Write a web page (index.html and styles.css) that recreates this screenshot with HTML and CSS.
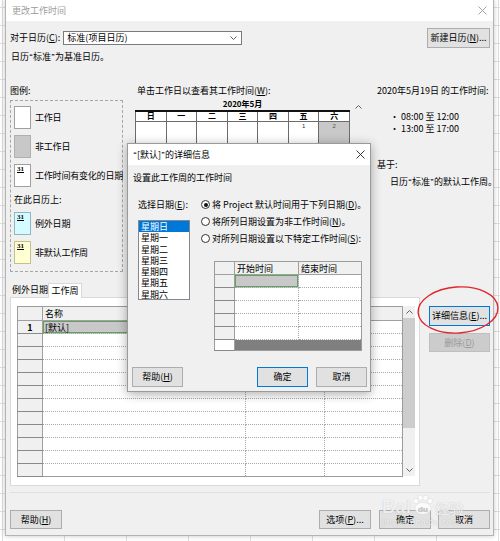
FILE: index.html
```html
<!DOCTYPE html>
<html lang="zh-CN">
<head>
<meta charset="utf-8">
<title>更改工作时间</title>
<link rel="stylesheet" href="styles.css">
</head>
<body>
<div class="desk">
  <div class="win">
    <div class="titlebar">
      <span class="win-title">更改工作时间</span>
      <svg class="xicon light" width="9" height="9" viewBox="0 0 9 9"><path d="M0.5 0.5L8.5 8.5M8.5 0.5L0.5 8.5"/></svg>
    </div>
    <div class="content">
      <div class="row-top">
        <span class="lbl">对于日历(<u>C</u>):</span>
        <div class="select"><span>标准(项目日历)</span>
          <svg class="chev" width="7" height="4" viewBox="0 0 7 4"><path d="M0.5 0.5L3.5 3.5L6.5 0.5"/></svg>
        </div>
        <div class="btn newcal">新建日历(<u>N</u>)...</div>
      </div>
      <div class="basecal">日历<span class="q">“</span>标准<span class="q">”</span>为基准日历。</div>

      <div class="main">
        <div class="legend-col">
          <div class="legend-h">图例:</div>
          <div class="legend-box">
            <div class="item"><div class="sw"></div><span class="sw-lbl">工作日</span></div>
            <div class="item"><div class="sw gray"></div><span class="sw-lbl">非工作日</span></div>
            <div class="item"><div class="sw"><span class="d31">31</span></div><span class="sw-lbl">工作时间有变化的日期</span></div>
            <div class="subhead">在此日历上:</div>
            <div class="item"><div class="sw cyan"><span class="d31">31</span></div><span class="sw-lbl">例外日期</span></div>
            <div class="item"><div class="sw yellow"><span class="d31">31</span></div><span class="sw-lbl">非默认工作周</span></div>
          </div>
        </div>

        <div class="cal-col">
          <div class="cal-label">单击工作日以查看其工作时间(<u>W</u>):</div>
          <div class="cal-body">
            <div class="cal-left">
              <div class="cal-month">2020年5月</div>
              <table class="cal">
                <tr class="cal-head"><th>日</th><th>一</th><th>二</th><th>三</th><th>四</th><th>五</th><th>六</th></tr>
                <tr><td></td><td></td><td></td><td></td><td></td><td>1</td><td class="nw">2</td></tr>
                <tr><td class="nw"></td><td></td><td></td><td></td><td></td><td></td><td class="nw"></td></tr>
                <tr><td class="nw"></td><td></td><td></td><td></td><td></td><td></td><td class="nw"></td></tr>
                <tr><td class="nw"></td><td></td><td></td><td></td><td></td><td></td><td class="nw"></td></tr>
                <tr><td class="nw"></td><td></td><td></td><td></td><td></td><td></td><td class="nw"></td></tr>
                <tr><td class="nw"></td><td></td><td></td><td></td><td></td><td></td><td></td></tr>
              </table>
            </div>
            <div class="cal-scroll">
              <svg class="arrow" width="7" height="4" viewBox="0 0 7 4"><path d="M0.5 3.5L3.5 0.5L6.5 3.5"/></svg>
            </div>
          </div>
        </div>

        <div class="info-col">
          <div class="line">2020年5月19日 的工作时间:</div>
          <div class="bullets">
            <div class="line ind">• 08:00 至 12:00</div>
            <div class="line ind">• 13:00 至 17:00</div>
          </div>
          <div class="line based">基于:</div>
          <div class="line ind based2">日历<span class="q">“</span>标准<span class="q">”</span>的默认工作周。</div>
        </div>
      </div>

      <div class="tabs">
        <div class="tab">例外日期</div>
        <div class="tab sel">工作周</div>
      </div>
      <div class="tab-row">
        <div class="panel">
          <div class="grid-wrap">
            <table class="grid">
              <colgroup><col class="c0"><col class="c1"><col class="c2"><col class="c3"></colgroup>
              <tr class="ghead"><th></th><th class="lt">名称</th><th></th><th></th></tr>
              <tr><th class="num">1</th><td class="selcell">[默认]</td><td></td><td></td></tr>
              <tr><th></th><td></td><td></td><td></td></tr>
              <tr><th></th><td></td><td></td><td></td></tr>
              <tr><th></th><td></td><td></td><td></td></tr>
              <tr><th></th><td></td><td></td><td></td></tr>
              <tr><th></th><td></td><td></td><td></td></tr>
              <tr><th></th><td></td><td></td><td></td></tr>
              <tr><th></th><td></td><td></td><td></td></tr>
              <tr><th></th><td></td><td></td><td></td></tr>
              <tr><th></th><td></td><td></td><td></td></tr>
              <tr><th></th><td></td><td></td><td></td></tr>
              <tr><th></th><td></td><td></td><td></td></tr>
            </table>
            <div class="vscroll">
              <div class="sb-btn"><svg class="arrow" width="7" height="4" viewBox="0 0 7 4"><path d="M0.5 3.5L3.5 0.5L6.5 3.5"/></svg></div>
              <div class="thumb"></div>
              <div class="sb-fill"></div>
              <div class="sb-btn"><svg class="arrow" width="7" height="4" viewBox="0 0 7 4"><path d="M0.5 0.5L3.5 3.5L6.5 0.5"/></svg></div>
            </div>
          </div>
        </div>
        <div class="side-btns">
          <div class="btn focus detail">详细信息(<u>E</u>)...</div>
          <div class="btn disabled del">删除(<u>D</u>)</div>
        </div>
      </div>

      <div class="sep"></div>
      <div class="bottom-btns">
        <div class="btn bb">帮助(<u>H</u>)</div>
        <div class="btn bb opt">选项(<u>P</u>)...</div>
        <div class="btn bb ok">确定</div>
        <div class="btn bb cancel">取消</div>
      </div>
    </div>
  </div>

  <div class="dialog">
    <div class="dlg-title">
      <span><span class="q">“</span>[默认]<span class="q">”</span>的详细信息</span>
      <svg class="xicon" width="9" height="9" viewBox="0 0 9 9"><path d="M0.5 0.5L8.5 8.5M8.5 0.5L0.5 8.5"/></svg>
    </div>
    <div class="dlg-group">设置此工作周的工作时间</div>
    <div class="dlg-main">
      <div class="dlg-left">
        <div class="dlg-lbl">选择日期(<u>E</u>):</div>
        <div class="listbox">
          <div class="li on">星期日</div>
          <div class="li">星期一</div>
          <div class="li">星期二</div>
          <div class="li">星期三</div>
          <div class="li">星期四</div>
          <div class="li">星期五</div>
          <div class="li">星期六</div>
        </div>
      </div>
      <div class="dlg-right">
        <div class="radio-row"><span class="radio on"></span>将 Project 默认时间用于下列日期(<u>D</u>)。</div>
        <div class="radio-row"><span class="radio"></span>将所列日期设置为非工作时间(<u>N</u>)。</div>
        <div class="radio-row"><span class="radio"></span>对所列日期设置以下特定工作时间(<u>S</u>):</div>
        <table class="tgrid">
          <colgroup><col class="t0"><col class="t1"><col class="t2"></colgroup>
          <tr class="thead"><th></th><th class="lt">开始时间</th><th class="lt">结束时间</th></tr>
          <tr><th></th><td class="selcell"></td><td></td></tr>
          <tr><th></th><td></td><td></td></tr>
          <tr><th></th><td></td><td></td></tr>
          <tr><th></th><td></td><td></td></tr>
          <tr><th></th><td></td><td></td></tr>
          <tr class="tlast"><th class="blank"></th><td colspan="2" class="darkbar"></td></tr>
        </table>
      </div>
    </div>
    <div class="dlg-btns">
      <div class="btn dbtn">帮助(<u>H</u>)</div>
      <div class="btn dbtn focus dok">确定</div>
      <div class="btn dbtn dcancel">取消</div>
    </div>
  </div>

  <svg class="ring" width="86" height="54" viewBox="0 0 86 54">
    <ellipse cx="43" cy="26" rx="40" ry="23" transform="rotate(-4 43 26)"/>
  </svg>

  <div class="wm">
    <div class="wm-top">
      <span class="wm-bai">Bai</span>
      <svg class="paw" width="22" height="20" viewBox="0 0 22 20">
        <circle cx="4" cy="6" r="2.6"/><circle cx="8.5" cy="2.8" r="2.6"/><circle cx="13.5" cy="2.8" r="2.6"/><circle cx="18" cy="6" r="2.6"/>
        <ellipse cx="11" cy="13.5" rx="8" ry="6"/>
        <text x="11" y="16.5" text-anchor="middle" class="paw-t">du</text>
      </svg>
      <span class="wm-jy">经验</span>
    </div>
    <div class="wm-url">jingyan.baidu.com</div>
  </div>
</div>
</body>
</html>
```

FILE: styles.css
```css
* { box-sizing: border-box; }
html, body { margin: 0; padding: 0; }
body {
  width: 500px;
  height: 541px;
  overflow: hidden;
  font-family: "Noto Sans CJK SC", "Microsoft YaHei", sans-serif;
  font-size: 9px;
  color: #000;
  background-color: #fff;
  background-image:
    linear-gradient(#dedede 1px, transparent 1px),
    linear-gradient(90deg, #dedede 1px, transparent 1px);
  background-size: 62px 18px;
  background-position: 0 7px, 2px 0;
}
u { text-decoration: underline; text-underline-offset: 1px; }
.q { font-family: "Liberation Sans", sans-serif; padding: 0 0.5px; }

.desk { position: relative; width: 500px; height: 541px; }

.win {
  margin-left: 5px;
  width: 489px;
  height: 536px;
  background: #f0f0f0;
  border: 1px solid #b4b4b4;
  border-top: none;
  box-shadow: 0 0 5px rgba(0, 0, 0, 0.22);
  display: flex;
  flex-direction: column;
}
.titlebar {
  height: 21px;
  flex: none;
  background: #fff;
  display: flex;
  align-items: center;
  justify-content: space-between;
  padding: 0 6px 0 6px;
}
.win-title { color: #9c9c9c; line-height: 12px; }
.xicon path { stroke: #222; stroke-width: 0.9; fill: none; }
.xicon.light path { stroke: #9a9a9a; }

.content {
  flex: 1;
  display: flex;
  flex-direction: column;
  padding: 0 3px 0 4px;
}
.row-top {
  margin-top: 6px;
  height: 21px;
  display: flex;
  align-items: center;
}
.lbl { line-height: 12px; }
.select {
  margin-left: 3px;
  width: 179px;
  height: 14px;
  background: #fff;
  border: 1px solid #7a7a7a;
  display: flex;
  align-items: center;
  justify-content: space-between;
  padding: 0 4px 0 3px;
  line-height: 12px;
}
.chev path, .arrow path { stroke: #606060; stroke-width: 1; fill: none; }

.btn {
  background: #e1e1e1;
  border: 1px solid #adadad;
  display: flex;
  align-items: center;
  justify-content: center;
  line-height: 12px;
  white-space: nowrap;
}
.btn.focus { border-color: #0078d7; }
.btn.disabled { background: #cccccc; border-color: #bfbfbf; color: #9a9a9a; }
.newcal { margin-left: auto; width: 63px; height: 20px; }

.basecal { margin-top: 3px; height: 12px; line-height: 12px; padding-left: 1px; }

.main { margin-top: 22px; height: 187px; display: flex; flex: none; }

.legend-col { width: 113px; flex: none; }
.legend-h { height: 12px; line-height: 12px; margin-bottom: 3px; }
.legend-box {
  height: 172px;
  border: 1px dashed #a6a6a6;
  padding: 5px 0 0 3px;
  display: flex;
  flex-direction: column;
}
.item { display: flex; align-items: center; height: 23px; margin-bottom: 6px; }
.sw {
  width: 17px;
  height: 23px;
  flex: none;
  background: #fff;
  border: 1px solid #a0a0a0;
}
.sw.gray { background: #c8c8c8; border-color: #b0b0b0; }
.sw.cyan { background: #d4fbff; border-color: #8fb8c0; }
.sw.yellow { background: #ffffd2; border-color: #c0c090; }
.d31 {
  display: block;
  font-family: "Liberation Serif", serif;
  font-weight: bold;
  font-size: 7px;
  line-height: 7px;
  padding: 1px 0 0 2px;
  text-decoration: underline;
}
.sw-lbl { margin-left: 4px; line-height: 12px; white-space: nowrap; letter-spacing: -0.2px; }
.subhead { margin-top: 1px; height: 12px; line-height: 12px; margin-bottom: 6px; }

.cal-col { margin-left: 12px; width: 231px; flex: none; }
.cal-label { height: 12px; line-height: 12px; padding-left: 2px; }
.cal-body { display: flex; }
.cal-left { width: 215px; }
.cal-month { height: 13px; line-height: 13px; text-align: center; font-weight: bold; font-size: 8px; }
.cal { width: 215px; border-collapse: collapse; table-layout: fixed; background: #fff; }
.cal th, .cal td { border: 1px solid #6c6c6c; padding: 0; }
.cal-head th {
  height: 10px;
  font-size: 8px;
  line-height: 8px;
  font-weight: bold;
  border-top: 2px solid #111;
}
.cal td {
  height: 25px;
  vertical-align: top;
  text-align: center;
  font-family: "Liberation Sans", sans-serif;
  font-size: 6px;
  line-height: 8px;
  color: #333;
}
.cal td.nw { background: #c8c8c8; color: #555; }
.cal-scroll { width: 16px; display: flex; justify-content: center; padding-top: 8px; }

.info-col { margin-left: 11px; flex: 1; }
.line { height: 12px; line-height: 12px; white-space: nowrap; }
.bullets { margin-top: 14px; }
.ind { padding-left: 13px; }
.based { margin-top: 24px; }
.based2 { margin-top: 5px; }

.tabs { margin-top: 10px; height: 15px; display: flex; align-items: flex-end; flex: none; }
.tab {
  height: 13px;
  width: 36px;
  margin-left: 2px;
  line-height: 12px;
  text-align: center;
}
.tab.sel {
  height: 15px;
  width: 34px;
  margin-left: 0;
  background: #fff;
  border: 1px solid #d9d9d9;
  border-bottom: none;
  margin-bottom: -1px;
  position: relative;
  z-index: 1;
  line-height: 14px;
}

.tab-row { display: flex; height: 189px; flex: none; }
.panel {
  width: 410px;
  height: 189px;
  background: #fff;
  border: 1px solid #d9d9d9;
  padding: 8px 0 0 6px;
}
.grid-wrap { display: flex; height: 170px; }
.grid {
  width: 385px;
  table-layout: fixed;
  border-collapse: collapse;
  border: 1px solid #9c9c9c;
}
.grid .c0 { width: 25px; }
.grid .c1 { width: 203px; }
.grid .c2 { width: 79px; }
.grid .c3 { width: 78px; }
.grid th, .grid td {
  height: 13px;
  padding: 0 0 0 2px;
  line-height: 11px;
  font-weight: normal;
  text-align: left;
  white-space: nowrap;
}
.grid td { border-right: 1px dotted #a8a8a8; border-bottom: 1px dotted #a8a8a8; }
.grid th { background: #f0f0f0; border-right: 1px solid #a0a0a0; border-bottom: 1px solid #8a8a8a; }
.grid .ghead th { height: 14px; border-bottom: 1px solid #a0a0a0; }
.grid th.num { text-align: center; font-weight: bold; padding: 0; }
.selcell { background: #c8c8c8; box-shadow: inset 0 0 0 1px #63a063; }

.vscroll { width: 12px; height: 170px; background: #f0f0f0; display: flex; flex-direction: column; }
.sb-btn { height: 12px; display: flex; align-items: center; justify-content: center; }
.thumb { height: 110px; background: #cdcdcd; }
.sb-fill { flex: 1; }

.side-btns { margin-left: 9px; width: 61px; padding-top: 9px; display: flex; flex-direction: column; }
.detail { height: 20px; }
.del { height: 19px; margin-top: 7px; }

.sep { margin-top: 6px; height: 1px; background: #e0e0e0; flex: none; }
.bottom-btns { margin-top: 17px; height: 19px; display: flex; flex: none; }
.bb { width: 52px; height: 19px; }
.opt { margin-left: auto; }
.ok { margin-left: 8px; }
.cancel { margin-left: 7px; }

/* dialog */
.dialog {
  position: absolute;
  left: 127px;
  top: 143px;
  width: 244px;
  height: 249px;
  background: #f0f0f0;
  border: 1px solid #9a9a9a;
  box-shadow: 0 2px 10px rgba(0, 0, 0, 0.33);
  display: flex;
  flex-direction: column;
}
.dlg-title {
  height: 21px;
  flex: none;
  background: #fff;
  display: flex;
  align-items: center;
  justify-content: space-between;
  padding: 0 5px 0 5px;
  line-height: 12px;
}
.dlg-group { margin-top: 7px; padding-left: 5px; height: 12px; line-height: 12px; }
.dlg-main { margin-top: 12px; padding-left: 10px; display: flex; height: 154px; }
.dlg-left { width: 52px; flex: none; }
.dlg-lbl { height: 17px; line-height: 17px; white-space: nowrap; }
.listbox {
  margin-top: 7px;
  height: 80px;
  background: #fff;
  border: 1px solid #828790;
}
.li { height: 11.25px; line-height: 11.25px; padding-left: 2px; }
.li.on { background: #0078d7; color: #fff; }
.dlg-right { margin-left: 11px; }
.radio-row { height: 17px; display: flex; align-items: center; white-space: nowrap; line-height: 12px; }
.radio {
  width: 9px;
  height: 9px;
  border: 1px solid #333;
  border-radius: 50%;
  background: #fff;
  margin-right: 2px;
  flex: none;
  display: flex;
  align-items: center;
  justify-content: center;
}
.radio.on::after { content: ""; width: 4px; height: 4px; border-radius: 50%; background: #111; }

.tgrid {
  margin-top: 14px;
  margin-left: 13px;
  width: 147px;
  table-layout: fixed;
  border-collapse: collapse;
  border: 1px solid #9c9c9c;
  background: #fff;
}
.tgrid .t0 { width: 20px; }
.tgrid .t1 { width: 64px; }
.tgrid .t2 { width: 63px; }
.tgrid th, .tgrid td { height: 13px; padding: 0 0 0 2px; line-height: 11px; font-weight: normal; text-align: left; white-space: nowrap; }
.tgrid td { border-right: 1px dotted #a8a8a8; border-bottom: 1px dotted #a8a8a8; }
.tgrid th { background: #f0f0f0; border-right: 1px solid #a0a0a0; border-bottom: 1px solid #8a8a8a; }
.tgrid .thead th { border-bottom: 1px solid #a0a0a0; }
.tgrid .tlast th, .tgrid .tlast td { height: 11px; }
.tgrid th.blank { background: #fff; }
.tgrid td.darkbar { background: #7f7f7f; }

.dlg-btns { margin-top: 17px; height: 20px; display: flex; padding: 0 3px 0 4px; }
.dbtn { width: 51px; height: 20px; }
.dok { margin-left: auto; }
.dcancel { margin-left: 8px; }

/* annotation ring */
.ring { position: absolute; left: 415px; top: 284px; }
.ring ellipse { fill: none; stroke: #e0262b; stroke-width: 1.4; }

/* watermark */
.wm {
  position: absolute;
  left: 382px;
  top: 496px;
  width: 96px;
  color: rgba(255, 255, 255, 0.8);
  text-shadow: 0 0 1px rgba(0, 0, 0, 0.25);
}
.wm-top { display: flex; align-items: flex-end; height: 20px; }
.wm-bai { font-family: "Liberation Sans", sans-serif; font-weight: bold; font-size: 18px; line-height: 18px; letter-spacing: 0.5px; }
.paw { margin: 0 2px 1px 0; }
.paw circle, .paw ellipse { fill: rgba(255, 255, 255, 0.8); stroke: rgba(0, 0, 0, 0.12); stroke-width: 0.5; }
.paw-t { font-family: "Liberation Sans", sans-serif; font-weight: bold; font-size: 8px; fill: #c9c9c9; }
.wm-jy { font-size: 14px; line-height: 16px; font-weight: bold; }
.wm-url { font-family: "Liberation Sans", sans-serif; font-size: 9px; line-height: 10px; margin-top: 1px; letter-spacing: 0.3px; }
```
